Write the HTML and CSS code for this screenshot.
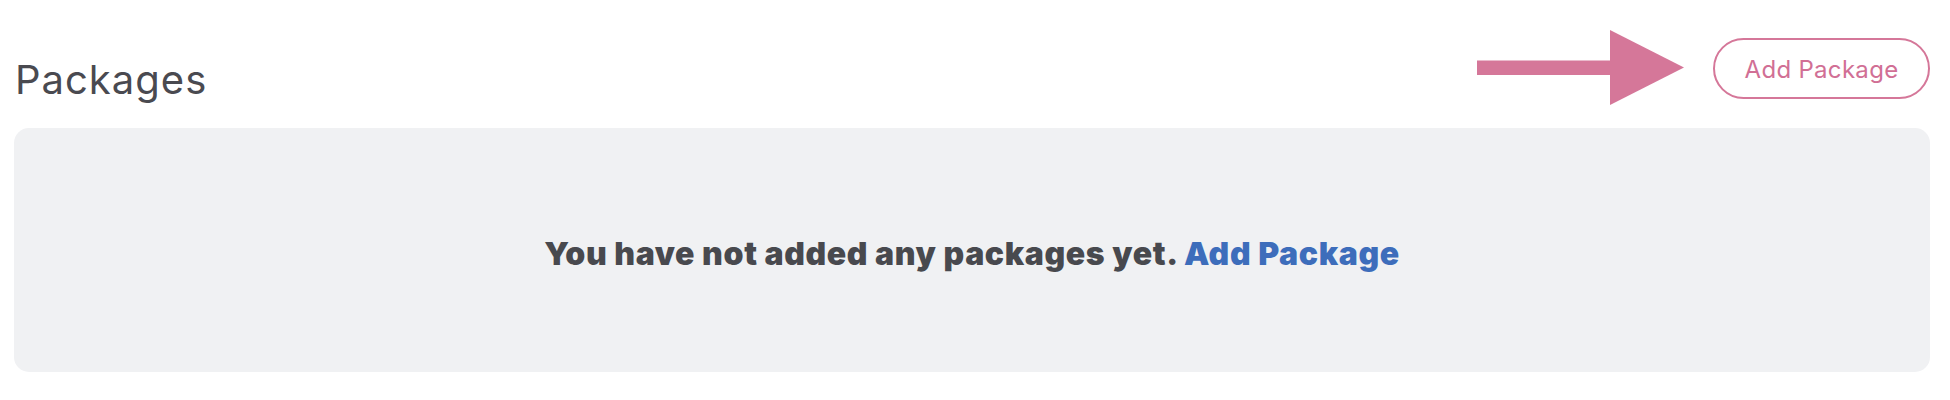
FILE: index.html
```html
<!DOCTYPE html>
<html lang="en">
<head>
<meta charset="utf-8">
<title>Packages</title>
<link rel="stylesheet" href="styles.css">
</head>
<body>
<div class="page">
  <header class="header">
    <h1 class="title">Packages</h1>
    <div class="actions">
      <svg class="arrow" width="208" height="75" viewBox="0 0 208 75" aria-hidden="true">
        <rect x="0" y="30.5" width="135" height="14.5" fill="#d57799"/>
        <polygon points="133,0 207,37.5 133,75" fill="#d57799"/>
      </svg>
      <button class="btn-outline" type="button">Add Package</button>
    </div>
  </header>
  <section class="empty">
    <p class="empty-text">You have not added any packages yet. <a class="empty-link" href="#">Add Package</a></p>
  </section>
</div>
</body>
</html>
```

FILE: styles.css
```css
html, body {
  margin: 0;
  padding: 0;
  background: #ffffff;
}

.page {
  padding: 0 20px 0 14px;
  font-family: "Inter", "Liberation Sans", sans-serif;
}

.header {
  height: 128px;
  display: flex;
  justify-content: space-between;
  align-items: flex-start;
}

.title {
  margin: 57px 0 0 1px;
  font-size: 40px;
  line-height: 46px;
  font-weight: 400;
  letter-spacing: 1px;
  color: #4a4a50;
}

.actions {
  display: flex;
  align-items: center;
  gap: 28px;
  margin-top: 30px;
}

.arrow {
  display: block;
}

.btn-outline {
  width: 217px;
  height: 61px;
  margin-top: 1px;
  border: 2px solid #d57799;
  border-radius: 31px;
  background: #ffffff;
  color: #d16f95;
  font-family: "Inter", "Liberation Sans", sans-serif;
  font-size: 24px;
  font-weight: 400;
  letter-spacing: 0.3px;
  padding: 2px 0 0;
}

.empty {
  height: 244px;
  background: #f0f1f3;
  border-radius: 15px;
  display: flex;
  align-items: center;
  justify-content: center;
}

.empty-text {
  margin: 6px 0 0;
  font-size: 32px;
  font-weight: 900;
  letter-spacing: 0.62px;
  color: #48494e;
}

.empty-link {
  color: #3d6dbb;
  text-decoration: none;
}
```
